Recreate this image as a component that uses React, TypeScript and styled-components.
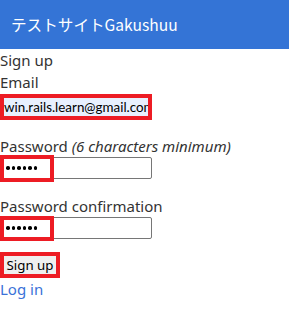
import React from "react";
import styled, { createGlobalStyle } from "styled-components";

const Global = createGlobalStyle`
  html, body { margin: 0; padding: 0; background: #fff; }
  body {
    font-family: "Noto Sans", "Noto Sans CJK JP", sans-serif;
    font-size: 15px;
    color: #333;
  }
`;

const Header = styled.header`
  height: 49px;
  background: #3474d6;
  display: flex;
  align-items: center;
  padding-left: 11px;
  color: #fff;
  font-family: "Noto Sans CJK JP", "Noto Sans", sans-serif;
  font-size: 15.6px;
  padding-bottom: 1px;
  box-sizing: border-box;
`;

const Main = styled.main`
  display: flex;
  flex-direction: column;
`;

const Line = styled.div`
  height: 22px;
  line-height: 22px;
  white-space: nowrap;
`;

const Field = styled.div<{ $top: number; $bottom: number }>`
  position: relative;
  width: 152px;
  margin-top: ${(p) => p.$top}px;
  margin-bottom: ${(p) => p.$bottom}px;
`;

const Input = styled.div<{ $fill?: boolean }>`
  box-sizing: border-box;
  width: 152px;
  height: 22px;
  border: 1px solid #767676;
  border-radius: 2px;
  background: ${(p) => (p.$fill ? "#e8f0fe" : "#fff")};
  display: flex;
  align-items: center;
  padding-left: 3px;
  font-family: "Lato", "Noto Sans", sans-serif;
  font-size: 13.4px;
  color: #000;
  overflow: hidden;
  white-space: nowrap;
`;

const Dots = styled.span`
  display: flex;
  gap: 2px;
  padding-left: 2px;
`;

const Dot = styled.span`
  width: 3.5px;
  height: 3.5px;
  border-radius: 50%;
  background: #000;
`;

const Mark = styled.div<{ $w: number; $h: number; $t: number }>`
  position: absolute;
  left: 0;
  top: ${(p) => p.$t}px;
  width: ${(p) => p.$w}px;
  height: ${(p) => p.$h}px;
  box-sizing: border-box;
  border: 4px solid #ed1c24;
  pointer-events: none;
`;

const Em = styled.em`
  font-style: italic;
`;

const Button = styled.div`
  box-sizing: border-box;
  width: 60px;
  height: 26px;
  border: 4px solid #ed1c24;
  background: #efefef;
  display: flex;
  align-items: center;
  justify-content: center;
  font-size: 13.3px;
  color: #000;
  margin-top: 13px;
`;

const Link = styled.a`
  color: #3a72d8;
  text-decoration: none;
  height: 22px;
  line-height: 22px;
`;

const PasswordDots = () => (
  <Dots>
    {Array.from({ length: 6 }).map((_, i) => (
      <Dot key={i} />
    ))}
  </Dots>
);

export default function App() {
  return (
    <>
      <Global />
      <Header>テストサイトGakushuu</Header>
      <Main>
        <Line>Sign up</Line>
        <Line>Email</Line>
        <Field $top={3} $bottom={17}>
          <Input $fill>win.rails.learn@gmail.com</Input>
          <Mark $w={152} $h={26} $t={-2} />
        </Field>
        <Line>Password <Em>(6 characters minimum)</Em></Line>
        <Field $top={0} $bottom={16}>
          <Input>
            <PasswordDots />
          </Input>
          <Mark $w={54} $h={27} $t={-2} />
        </Field>
        <Line>Password confirmation</Line>
        <Field $top={0} $bottom={0}>
          <Input>
            <PasswordDots />
          </Input>
          <Mark $w={54} $h={25} $t={-1} />
        </Field>
        <Button>Sign up</Button>
        <Link href="#">Log in</Link>
      </Main>
    </>
  );
}
